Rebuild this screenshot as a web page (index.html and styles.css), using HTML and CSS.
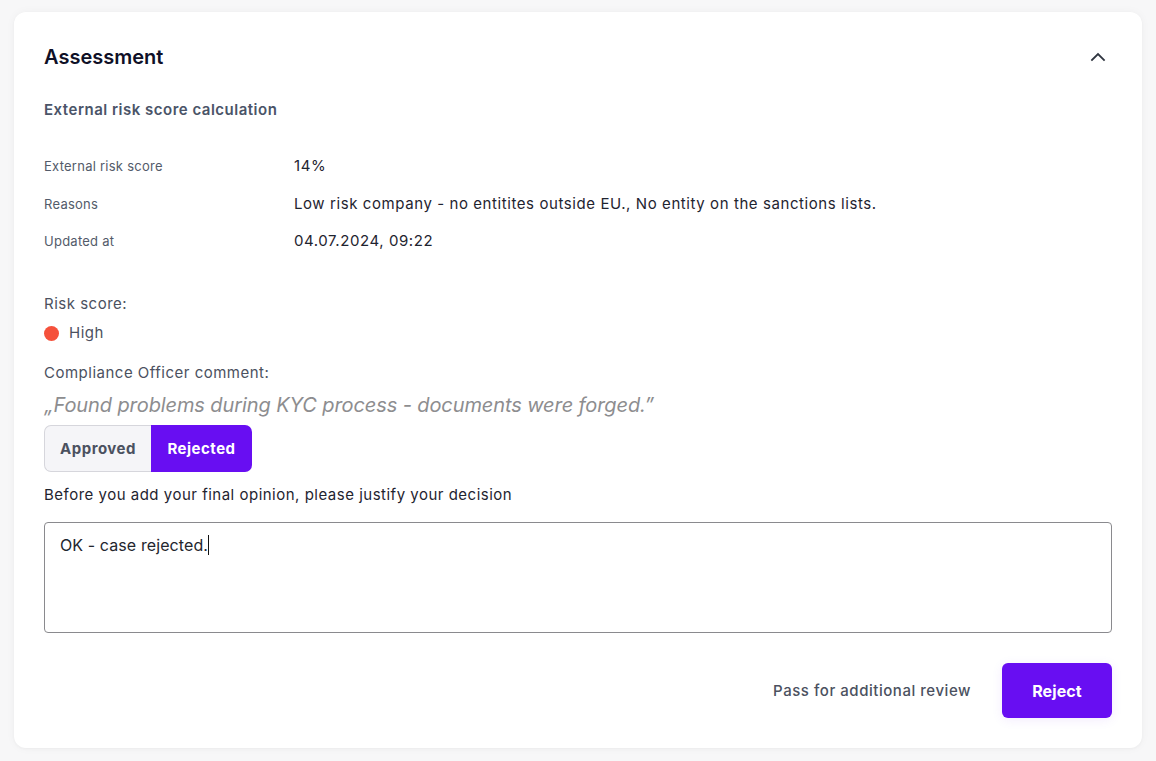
FILE: index.html
```html
<!DOCTYPE html>
<html lang="en">
<head>
<meta charset="utf-8">
<title>Assessment</title>
<link rel="stylesheet" href="styles.css">
</head>
<body>
<section class="card">
  <header class="card-header">
    <h2 class="title">Assessment</h2>
    <svg class="chevron" width="16" height="16" viewBox="0 0 16 16" aria-hidden="true">
      <polyline points="2,11 8,5 14,11" fill="none" stroke="#2f3540" stroke-width="1.8" stroke-linecap="square"/>
    </svg>
  </header>

  <h3 class="subtitle">External risk score calculation</h3>

  <dl class="details">
    <dt>External risk score</dt><dd>14%</dd>
    <dt>Reasons</dt><dd>Low risk company - no entitites outside EU., No entity on the sanctions lists.</dd>
    <dt>Updated at</dt><dd>04.07.2024, 09:22</dd>
  </dl>

  <p class="label risk-label">Risk score:</p>
  <div class="risk"><span class="dot"></span><span>High</span></div>

  <p class="label comment-label">Compliance Officer comment:</p>
  <p class="quote">„Found problems during KYC process - documents were forged.”</p>

  <div class="segment">
    <button class="seg seg-off">Approved</button>
    <button class="seg seg-on">Rejected</button>
  </div>

  <p class="justify">Before you add your final opinion, please justify your decision</p>

  <div class="textarea">OK - case rejected.<span class="caret"></span></div>

  <footer class="actions">
    <button class="link-btn">Pass for additional review</button>
    <button class="primary-btn">Reject</button>
  </footer>
</section>
</body>
</html>
```

FILE: styles.css
```css
* { box-sizing: border-box; }

html, body { height: 100%; }

body {
  margin: 0;
  padding: 12px 14px 0 14px;
  background: #f7f7f8;
  font-family: Inter, "Noto Sans", "Liberation Sans", sans-serif;
  color: #1f2430;
}

.card {
  background: #ffffff;
  border-radius: 12px;
  box-shadow: 0 0 10px rgba(0, 0, 0, 0.04), 0 1px 3px rgba(0, 0, 0, 0.03);
  padding: 32px 30px 30px 30px;
  height: 736px;
}

.card-header {
  display: flex;
  align-items: center;
  justify-content: space-between;
  height: 26px;
}

.title {
  margin: 0;
  font-size: 20px;
  line-height: 26px;
  font-weight: 600;
  color: #0f1027;
}

.chevron { margin-right: 6px; display: block; }

.subtitle {
  margin: 30px 0 0 0;
  font-size: 15px;
  line-height: 20px;
  font-weight: 600;
  letter-spacing: 0.5px;
  color: #4a5468;
}

.details {
  margin: 36px 0 0 0;
  display: grid;
  grid-template-columns: 250px 1fr;
  row-gap: 17.5px;
  align-items: center;
}

.details dt {
  font-size: 13px;
  line-height: 20px;
  letter-spacing: 0.25px;
  color: #535b6a;
}

.details dd {
  margin: 0;
  font-size: 15px;
  line-height: 20px;
  letter-spacing: 0.58px;
  color: #1f2430;
}

.label {
  margin: 0;
  font-size: 15px;
  line-height: 20px;
  letter-spacing: 0.5px;
  color: #4b5160;
}

.risk-label { margin-top: 43px; }

.risk {
  margin-top: 9px;
  display: flex;
  align-items: center;
  gap: 10px;
  font-size: 15px;
  line-height: 20px;
  letter-spacing: 0.5px;
  color: #4b5160;
}

.dot {
  width: 15px;
  height: 15px;
  border-radius: 50%;
  background: #f5513b;
}

.comment-label { margin-top: 20px; }

.quote {
  margin: 9px 0 0 0;
  font-size: 20px;
  line-height: 26px;
  font-style: italic;
  letter-spacing: -0.1px;
  color: #8d8d8f;
}

.segment {
  margin-top: 7px;
  display: inline-flex;
  height: 47px;
}

.seg {
  font-family: inherit;
  font-size: 15px;
  font-weight: 700;
  letter-spacing: 0.5px;
  border: none;
  padding: 0;
  cursor: pointer;
}

.seg-off {
  width: 107px;
  background: #f5f5f8;
  color: #4b5160;
  border: 1px solid #d6d6dc;
  border-right: none;
  border-radius: 7px 0 0 7px;
}

.seg-on {
  width: 101px;
  background: #680ef2;
  color: #ffffff;
  border-radius: 0 7px 7px 0;
}

.justify {
  margin: 13px 0 0 0;
  font-size: 15px;
  line-height: 20px;
  letter-spacing: 0.5px;
  color: #1f2430;
}

.textarea {
  margin-top: 17px;
  height: 111px;
  border: 1px solid #8a8a8e;
  border-radius: 4px;
  padding: 11px 15px;
  font-size: 16px;
  line-height: 22px;
  letter-spacing: 0.1px;
  color: #23262e;
}

.caret {
  display: inline-block;
  width: 1px;
  height: 20px;
  background: #111;
  vertical-align: -4px;
}

.actions {
  margin-top: 30px;
  display: flex;
  justify-content: flex-end;
  align-items: center;
  gap: 31px;
}

.link-btn {
  background: none;
  border: none;
  padding: 0;
  font-family: inherit;
  font-size: 15px;
  font-weight: 500;
  letter-spacing: 0.54px;
  color: #4b5160;
  cursor: pointer;
}

.primary-btn {
  width: 110px;
  height: 55px;
  border: none;
  border-radius: 6px;
  background: #680ef2;
  color: #ffffff;
  font-family: inherit;
  font-size: 16px;
  font-weight: 700;
  letter-spacing: 0.1px;
  box-shadow: 0 2px 12px rgba(104, 14, 242, 0.08);
  cursor: pointer;
}
```
